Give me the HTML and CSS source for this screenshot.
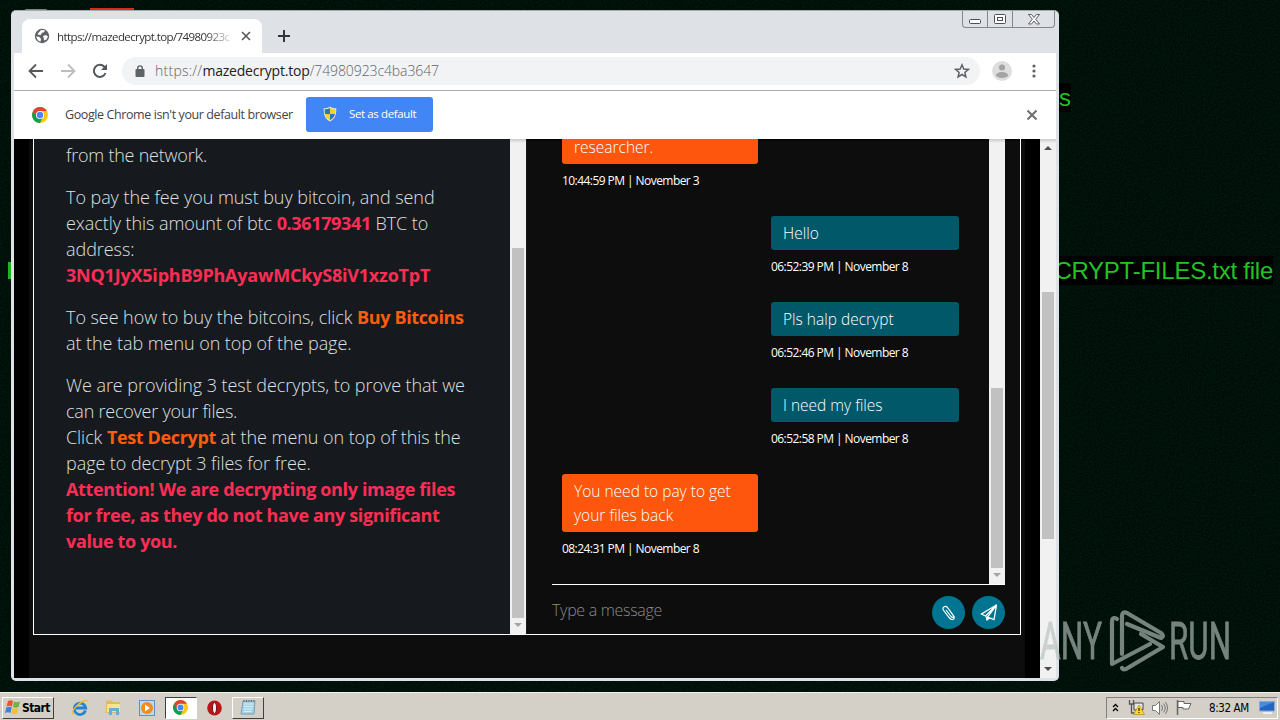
FILE: index.html
```html
<!DOCTYPE html>
<html lang="en">

<head>
  <meta charset="UTF-8">
  <meta name="viewport" content="width=device-width, initial-scale=1.0">
  <title>Desktop</title>
  <link rel="stylesheet" href="styles.css">
</head>

<body>
  <div class="desktop">
    <svg class="grain" width="1280" height="692">
      <filter id="noise" color-interpolation-filters="sRGB">
        <feTurbulence type="fractalNoise" baseFrequency="0.6" numOctaves="2" />
        <feColorMatrix values="0 0 0 0 0  0 0.16 0 0 -0.01  0 0.1 0 0 -0.01  0 0 0 0 1" />
      </filter>
      <rect width="1280" height="692" filter="url(#noise)" />
    </svg>
    <div class="wall-mark"></div>
    <div class="wall-icon"></div>
    <p class="wall-text wall-top">s</p>
    <p class="wall-text wall-file">CRYPT-FILES.txt file</p>
    <i class="wall-edge"></i>

    <main class="window">
      <header class="titlebar">
        <div class="tab">
          <svg class="globe" width="16" height="16" viewBox="0 0 16 16">
            <circle cx="8" cy="8" r="7.2" fill="#5f6368" />
            <path d="M2 8.5l3 .3 2 2-.5 3-2.5-1.2zM7 2l4 .2-1 2-2 .5-1 2-2 .3-1.5-1zM9 8l3-1 2 1.5-1.5 3-2.5 1-.3-2.5z" fill="#fff" />
          </svg>
          <span class="tab-title">https://mazedecrypt.top/74980923c</span>
          <svg class="tab-close" width="10" height="10" viewBox="0 0 10 10"><path d="M1 1l8 8M9 1l-8 8" stroke="#55595e" stroke-width="1.6" /></svg>
        </div>
        <svg class="new-tab" width="12" height="12" viewBox="0 0 12 12"><path d="M6 0v12M0 6h12" stroke="#33373c" stroke-width="2" /></svg>
        <div class="controls">
          <span class="control"><svg width="13" height="6"><rect x=".5" y=".5" width="11" height="4" rx="1" fill="#fff" stroke="#4a4e58" /></svg></span>
          <span class="control"><svg width="12" height="11"><rect x=".5" y=".5" width="11" height="9" rx="1" fill="#fff" stroke="#4a4e58" /><rect x="3.5" y="3.5" width="5" height="3" fill="#fff" stroke="#4a4e58" /></svg></span>
          <span class="control close"><svg width="12" height="11" viewBox="0 0 12 11"><path d="M.5.5h3L6 3.5 8.5.5h3L7.7 5.3l3.800 4.700h-3L6 7l-2.500 3h-3l3.800-4.700z" fill="#fff" stroke="#4a4e58" stroke-width=".9" /></svg></span>
        </div>
      </header>

      <nav class="toolbar">
        <svg width="16" height="16" viewBox="0 0 16 16"><path d="M15 8H2M8 1.500L1.500 8 8 14.500" fill="none" stroke="#55595e" stroke-width="1.800" /></svg>
        <svg width="16" height="16" viewBox="0 0 16 16"><path d="M1 8h13M8 1.500L14.500 8 8 14.500" fill="none" stroke="#bcbec1" stroke-width="1.800" /></svg>
        <svg width="16" height="16" viewBox="0 0 16 16"><path d="M13.500 10A6 6 0 1 1 12.300 3.800L14 5.500" fill="none" stroke="#55595e" stroke-width="2" /><path d="M15 1v6H9z" fill="#55595e" /></svg>
        <div class="address">
          <svg width="10" height="12" viewBox="0 0 10 12"><rect x=".5" y="4" width="9" height="8" rx="1" fill="#5f6368" /><path d="M2.700 5V3.200a2.300 2.300 0 0 1 4.600 0V5" fill="none" stroke="#5f6368" stroke-width="1.400" /></svg>
          <span class="url"><span class="scheme">https://</span><b>mazedecrypt.top</b>/74980923c4ba3647</span>
          <svg class="star" width="16" height="16" viewBox="0 0 16 16"><path d="M8 1.800l1.800 4.200 4.500.4-3.400 3 1 4.500L8 11.500l-3.900 2.400 1-4.500-3.400-3 4.500-.4z" fill="none" stroke="#5f6368" stroke-width="1.500" /></svg>
        </div>
        <svg class="avatar" width="20" height="20" viewBox="0 0 20 20"><circle cx="10" cy="10" r="10" fill="#dedede" /><circle cx="10" cy="6.500" r="3" fill="#a3a3a3" /><ellipse cx="10" cy="14" rx="6" ry="3" fill="#a3a3a3" /></svg>
        <svg class="dots" width="4" height="14" viewBox="0 0 4 14"><g fill="#5f6368"><circle cx="2" cy="2" r="1.600" /><circle cx="2" cy="7" r="1.600" /><circle cx="2" cy="12" r="1.600" /></g></svg>
      </nav>

      <section class="infobar">
        <svg width="16" height="16" viewBox="0 0 16 16"><use href="#chrome" /></svg>
        <span class="info-text">Google Chrome isn't your default browser</span>
        <button class="default-btn" type="button">
          <svg width="14" height="16" viewBox="0 0 14 16">
            <path d="M7 .5C9 2 11 2.300 13.300 2.300 13.500 9 12 13 7 15.500 2 13 .5 9 .7 2.300 3 2.300 5 2 7 .5z" fill="#e8e4d0" />
            <path d="M7 2v6H2Q1.500 6 1.800 3.300 5 3.200 7 2zM7 8h5q-1 4-5 6.200z" fill="#2a78b8" />
            <path d="M7 2v6h5q.5-2 .2-4.700Q9 3.200 7 2zM7 8H2q1 4 5 6.200z" fill="#f8cf32" />
          </svg>
          <span>Set as default</span>
        </button>
        <svg class="info-close" width="10" height="10" viewBox="0 0 10 10"><path d="M.5.5l9 9M9.500.5l-9 9" stroke="#6d6f72" stroke-width="2" /></svg>
      </section>

      <div class="page">
        <div class="content">
          <article class="note">
            <div class="note-text">
              <p class="tight">from the network.</p>
              <p>To pay the fee you must buy bitcoin, and send<br>
                exactly this amount of btc <b>0.36179341</b> BTC to<br>
                address:<br>
                <b class="wallet">3NQ1JyX5iphB9PhAyawMCkyS8iV1xzoTpT</b></p>
              <p>To see how to buy the bitcoins, click <b class="menu">Buy Bitcoins</b><br>
                at the tab menu on top of the page.</p>
              <p>We are providing 3 test decrypts, to prove that we<br>
                <span class="tight">can recover your files.</span><br>
                Click <b class="menu">Test Decrypt</b> at the menu on top of this the<br>
                page to decrypt 3 files for free.<br>
                <b>Attention! We are decrypting only image files<br>
                for free, as they do not have any significant<br>
                value to you.</b></p>
            </div>
            <div class="scroll note-scroll"><i class="thumb"></i><i class="down"></i></div>
          </article>
          <section class="chat">
            <div class="log">
              <div class="messages">
                <div class="msg support first"><p class="bubble">researcher.</p><time>10:44:59 PM | November 3</time></div>
                <div class="msg user"><p class="bubble">Hello</p><time>06:52:39 PM | November 8</time></div>
                <div class="msg user"><p class="bubble">Pls halp decrypt</p><time>06:52:46 PM | November 8</time></div>
                <div class="msg user"><p class="bubble">I need my files</p><time>06:52:58 PM | November 8</time></div>
                <div class="msg support"><p class="bubble">You need to pay to get<br>your files back</p><time>08:24:31 PM | November 8</time></div>
              </div>
              <div class="scroll chat-scroll"><i class="thumb"></i><i class="down"></i></div>
            </div>
            <div class="compose">
              <span class="placeholder">Type a message</span>
              <span class="round"><svg width="15" height="16" viewBox="0 0 15 16"><path d="M5 5l5.500 7c1.500 1 2.500 0 1.700-1.500L6.500 2.500C4.500.2 1 2 2.300 5l6.200 8c2.500 3 6 1 4.300-2L8 4.500" fill="none" stroke="#fff" stroke-width="1.200" /></svg></span>
              <span class="round"><svg width="18" height="18" viewBox="0 0 18 18"><path d="M16.500 1L1.500 10l4 2zM16.500 1L7.500 13l6.500 2.500z" fill="none" stroke="#fff" stroke-width="1.300" /><path d="M5.500 12l2 1 3 1.200L6.500 17z" fill="#fff" /></svg></span>
            </div>
          </section>
        </div>
        <div class="scroll page-scroll"><i class="up"></i><i class="thumb"></i><i class="down"></i></div>
      </div>
    </main>

    <svg class="watermark" width="200" height="70" viewBox="0 0 200 70">
      <g class="watermark-text">
        <text x="0" y="54" textLength="62" lengthAdjust="spacingAndGlyphs">ANY</text>
        <text x="129" y="54" textLength="62" lengthAdjust="spacingAndGlyphs">RUN</text>
      </g>
      <g fill="none" stroke="#b6c0bc" stroke-width="4.200" stroke-linecap="round" stroke-linejoin="round">
        <path d="M77 14q-5-3-5 3v42l38-20" />
        <path d="M82 49V11q0-5 5-3l34 20q4 3 0 5L87 19" />
        <path d="M101 29l22 13-37 22q-3 1-4-1" />
      </g>
    </svg>
  </div>

  <footer class="taskbar">
    <div class="start">
      <svg width="16" height="15" viewBox="0 0 16 15"><path d="M3 1q3-1.500 5 0L7 6.500q-2.500-1.500-5.500 0z" fill="#e8562a" /><path d="M9 1.500q3 1.300 6 0L13.500 7q-3 1.300-5.500 0z" fill="#6fb43f" /><path d="M1.300 7.500q3-1.400 5.500 0L5.500 13Q3 11.500 0 13z" fill="#3b86d8" /><path d="M7.700 8q3 1.400 5.700 0L12 13.500q-3 1.300-5.700 0z" fill="#f5c02e" /></svg>
      <span>Start</span>
    </div>
    <div class="task ie"><svg width="18" height="18" viewBox="0 0 18 18"><path d="M14.500 11.500A5.700 5.700 0 1 1 14.700 9H4" fill="none" stroke="#2484d0" stroke-width="2.800" /><path d="M2 15.500C-1 12 12-1 16.500 2" fill="none" stroke="#e9bd38" stroke-width="1.400" /></svg></div>
    <div class="task folder"><svg width="17" height="17" viewBox="0 0 17 17"><path d="M1 3l1-1.500h5L8 3h7v11H1z" fill="#dcbd58" /><path d="M2 5h13v8H2z" fill="#f8e48f" /><path d="M4 16V9h10v7h-3v-4H7v4z" fill="#62aee0" /></svg></div>
    <div class="task media"><svg width="16" height="16" viewBox="0 0 16 16"><rect x=".5" y=".5" width="15" height="15" fill="#b9dbf4" stroke="#5b93c7" /><circle cx="8" cy="8" r="6" fill="#f28a1c" /><path d="M6 4.500l5 3.500-5 3.500z" fill="#fff" /></svg></div>
    <div class="task active">
      <svg width="15" height="15" viewBox="0 0 16 16">
        <g id="chrome"><circle cx="8" cy="8" r="8" fill="#fbc817" /><path d="M8 8L1.100 4A8 8 0 0 0 8 16l3-6z" fill="#109d58" /><path d="M8 4h6.900A8 8 0 0 0 1.100 4L4.500 10z" fill="#dc4437" /><circle cx="8" cy="8" r="4" fill="#fff" /><circle cx="8" cy="8" r="3.200" fill="#4a87ee" /></g>
      </svg>
    </div>
    <div class="task opera"><svg width="15" height="16" viewBox="0 0 15 16"><ellipse cx="7.500" cy="8" rx="7.300" ry="7.600" fill="#b9151b" /><ellipse cx="7.500" cy="8" rx="2.100" ry="5.500" fill="#eee" stroke="#7b0d10" /></svg></div>
    <div class="task raised"><svg width="16" height="17" viewBox="0 0 16 17"><path d="M3 2h12l-1 13H1z" fill="#a4d4e6" stroke="#789eaf" /><path d="M4 5h9M4 7.500h9M3.500 10h9M3.500 12.500h8" stroke="#d7eef5" /><path d="M4 1v2M6.500 1v2M9 1v2M11.500 1v2M14 1v2" stroke="#667" /></svg></div>
    <div class="tray">
      <svg width="7" height="10" viewBox="0 0 7 10"><path d="M1 4l2.500-2.500L6 4M1 8l2.500-2.500L6 8" fill="none" stroke="#000" stroke-width="1.300" /></svg>
      <svg class="network" width="17" height="15" viewBox="0 0 17 15"><path d="M1.500 0v4h4V0M3.500 4v9H7" fill="none" stroke="#555" stroke-width="1.300" /><path d="M6 3h9v7H6z" fill="#e6e6e6" stroke="#444" /><path d="M11 5l5.500 9.500h-11z" fill="#ffda22" stroke="#a98d16" stroke-width=".7" /><path d="M11 8v3M11 12v1" stroke="#222" stroke-width="1.200" /></svg>
      <svg class="sound" width="16" height="14" viewBox="0 0 16 14"><path d="M.5 4.500h3l4-4v13l-4-4h-3z" fill="#fff" stroke="#777" /><path d="M9.500 4q2 3 0 6M11.500 2.500q3.500 4.500 0 9M13.500 1q4 6 0 12" fill="none" stroke="#777" /></svg>
      <svg class="flag" width="16" height="15" viewBox="0 0 16 15"><path d="M1.500 0v15" stroke="#666" stroke-width="1.500" /><path d="M2 1.500h6v2h7L12.500 9H7V7.500H2z" fill="#fff" stroke="#666" /></svg>
      <span class="clock">8:32 AM</span>
      <svg class="show" width="16" height="13" viewBox="0 0 16 13"><path d="M.5.500h15v9.500H.5z" fill="#2365c6" stroke="#8aa8d2" /><path d="M1 1h14L1 7z" fill="#4a8be2" /><path d="M4 12h9" stroke="#eee" stroke-width="2" /></svg>
    </div>
  </footer>
</body>

</html>
```
FILE: styles.css
```css
* {
  box-sizing: border-box;
}

body {
  margin: 0;
  width: 1280px;
  height: 720px;
  overflow: hidden;
  font-family: "Open Sans", "Noto Sans", sans-serif;
}

p {
  margin: 0;
}

svg {
  display: block;
  flex: none;
}

.desktop {
  position: relative;
  height: 692px;
  background: #00120b;
  overflow: hidden;
}

/* wallpaper */
.grain {
  opacity: 0.7;
}

.wall-mark,
.wall-icon,
.wall-text,
.wall-edge {
  position: absolute;
}

.wall-mark {
  left: 90px;
  top: 8px;
  width: 44px;
  height: 4px;
  background: #d92b1c;
}

.wall-icon {
  left: 24px;
  top: 9px;
  width: 24px;
  height: 3px;
  background: #7b8580;
  border-radius: 8px 8px 0 0;
}

.wall-text {
  color: #22c322;
  background: #000;
  font: 24px/29px "Liberation Sans", Arial, sans-serif;
  white-space: nowrap;
}

.wall-top {
  left: 1059px;
  top: 83px;
}

.wall-file {
  right: 7px;
  top: 256px;
  letter-spacing: -0.25px;
}

.wall-edge {
  left: 8px;
  top: 262px;
  width: 3px;
  height: 17px;
  background: #22b322;
}

/* browser window */
.window {
  position: absolute;
  left: 11px;
  top: 10px;
  width: 1048px;
  height: 671px;
  padding: 0 3px 3px;
  display: flex;
  flex-direction: column;
  background: #dee1e6;
  border-top: 1px solid #a5aaae;
  border-radius: 5px;
  overflow: hidden;
}

.titlebar {
  height: 42px;
  display: flex;
  align-items: flex-end;
}

.tab {
  width: 240px;
  height: 34px;
  margin-left: 8px;
  padding: 0 11px 0 12px;
  display: flex;
  align-items: center;
  background: #fff;
  border-radius: 8px 8px 0 0;
}

.tab-title {
  width: 178px;
  margin-left: 7px;
  font-size: 11.5px;
  letter-spacing: -0.6px;
  white-space: nowrap;
  overflow: hidden;
  color: #333;
  mask-image: linear-gradient(90deg, #000 148px, transparent 178px);
}

.tab-close {
  margin-left: auto;
}

.new-tab {
  margin: 0 0 11px 16px;
}

.controls {
  align-self: flex-start;
  display: flex;
  height: 17px;
  margin-left: auto;
  margin-right: 1px;
  border: 1px solid #83878f;
  border-top: 0;
  border-radius: 0 0 4px 4px;
}

.control {
  width: 25px;
  display: flex;
  align-items: center;
  justify-content: center;
  border-right: 1px solid #83878f;
}

.control:first-child {
  padding-top: 5px;
}

.control.close {
  width: 41px;
  border: 0;
}

.toolbar {
  height: 38px;
  display: flex;
  align-items: center;
  gap: 16px;
  padding: 0 20px 2px 14px;
  background: #fff;
  border-bottom: 1px solid #acaeb1;
}

.address {
  flex: 1;
  height: 28px;
  margin-left: -2px;
  padding: 0 10px 0 13px;
  display: flex;
  align-items: center;
  background: #f1f3f4;
  border-radius: 14px;
}

.url {
  margin-left: 10px;
  font-size: 14px;
  font-weight: 300;
  letter-spacing: -0.1px;
  color: #5f6368;
}

.url .scheme {
  letter-spacing: 0.25px;
}

.url b {
  font-weight: 400;
  letter-spacing: -0.2px;
  color: #202124;
}

.star {
  margin-left: auto;
}

.avatar {
  margin: 0 4px 0 -4px;
}

.infobar {
  height: 48px;
  display: flex;
  align-items: center;
  padding: 0 19px 0 18px;
  background: #fff;
}

.info-text {
  width: 241px;
  margin-left: 17px;
  padding-bottom: 1px;
  font-size: 12.5px;
  letter-spacing: -0.4px;
  color: #444;
  white-space: nowrap;
}

.default-btn {
  width: 127px;
  height: 35px;
  padding: 0 0 2px 17px;
  display: flex;
  align-items: center;
  gap: 12px;
  border: 0;
  border-radius: 3px;
  background: #4285f4;
  color: #fff;
  font: 11.5px "Open Sans", "Noto Sans", sans-serif;
  letter-spacing: -0.38px;
  white-space: nowrap;
  margin-bottom: 1px;
}

.info-close {
  margin-left: auto;
}

.page {
  flex: 1;
  display: flex;
  width: 1042px;
  background: #000;
  overflow: hidden;
}

.content {
  width: 996px;
  margin: 0 15px;
  padding: 0 4px 43px;
  display: flex;
  background: #0d0d0d;
  box-shadow: inset 0 3px 3px -2px #000;
}

/* ransom note */
.note {
  width: 494px;
  display: flex;
  background: #16191d;
  border-left: 1px solid #fff;
  border-bottom: 1px solid #fff;
}

.note-text {
  width: 476px;
  padding: 3px 0 0 32px;
  font-size: 18px;
  font-weight: 300;
  line-height: 26px;
  letter-spacing: -0.06px;
  color: #dfe0e1;
  white-space: nowrap;
}

.note-text p {
  margin-bottom: 16px;
}

.note-text .tight {
  letter-spacing: -0.23px;
}

.note-text b {
  font-weight: 700;
  letter-spacing: -0.36px;
  color: #ff2d55;
}

.note-text .wallet {
  letter-spacing: -0.21px;
}

.note-text .menu {
  color: #ff5c0f;
}

/* scrollbars */
.scroll {
  width: 16px;
  flex: none;
  display: flex;
  flex-direction: column;
  align-items: center;
  background: linear-gradient(#c9c9c9, #f1f1f1 4px);
}

.thumb {
  width: 12px;
  background: #c1c1c1;
}

.up,
.down {
  border: 4px solid transparent;
}

.down {
  margin-top: 5px;
  border-top-color: #a3a3a3;
  border-bottom: 0;
}

.up {
  margin-top: 7px;
  border-bottom-color: #505050;
  border-top: 0;
}

.note-scroll .thumb {
  height: 370px;
  margin-top: 109px;
}

.chat-scroll .thumb {
  height: 180px;
  margin-top: 249px;
}

.page-scroll .thumb {
  height: 247px;
  margin-top: 142px;
}

.page-scroll .down {
  margin-top: auto;
  margin-bottom: 7px;
  border-top-color: #505050;
}

/* chat */
.chat {
  flex: 1;
  padding: 0 15px 0 25px;
  border-right: 1px solid #fff;
  border-bottom: 1px solid #fff;
}

.log {
  height: 446px;
  display: flex;
  border-bottom: 1px solid #fff;
  overflow: hidden;
}

.messages {
  flex: 1;
  padding: 0 30px 0 10px;
}

.msg {
  width: 196px;
  margin-bottom: 26px;
}

.msg.user {
  width: 188px;
  margin-left: auto;
}

.msg.first {
  margin-top: -9px;
}

.bubble {
  padding: 5px 12px;
  border-radius: 3px;
  font-size: 15.5px;
  font-weight: 300;
  line-height: 24px;
  color: #fff;
  white-space: nowrap;
}

.support .bubble {
  background: #ff560d;
}

.user .bubble {
  background: #005869;
}

.msg time {
  display: block;
  margin-top: 8px;
  font-size: 12px;
  line-height: 18px;
  letter-spacing: -0.56px;
  color: #fff;
  white-space: nowrap;
}

.compose {
  display: flex;
  gap: 7px;
  padding-top: 11px;
}

.placeholder {
  flex: 1;
  font-size: 16px;
  font-weight: 300;
  line-height: 28px;
  letter-spacing: -0.3px;
  color: #8a8a8a;
}

.round {
  width: 33px;
  height: 33px;
  display: flex;
  align-items: center;
  justify-content: center;
  border-radius: 50%;
  background: #007490;
}

.watermark {
  position: absolute;
  left: 1040px;
  top: 605px;
  opacity: 0.65;
}

.watermark-text {
  font-family: Roboto, sans-serif;
  font-size: 52px;
  fill: #b6c0bc;
  stroke: #b6c0bc;
  stroke-width: 0.8px;
}

/* taskbar */
.taskbar {
  height: 28px;
  padding: 2px 2px 0;
  display: flex;
  align-items: center;
  background: #d4d0c8;
  border-top: 1px solid #f4f2ee;
}

.start {
  width: 52px;
  height: 22px;
  display: flex;
  align-items: center;
  gap: 1px;
  padding-left: 2px;
  margin-right: 14px;
  border: 1px solid;
  border-color: #fff #404040 #404040 #fff;
  font: bold 12px "DejaVu Sans Condensed", "DejaVu Sans", sans-serif;
  letter-spacing: -0.6px;
}

.task {
  width: 32px;
  height: 22px;
  margin-right: 1.6px;
  display: flex;
  align-items: center;
  justify-content: center;
}

.task.ie {
  margin-left: -4px;
}

.active {
  background: #fff;
  border: 1px solid;
  border-color: #404040 #fff #fff #404040;
}

.raised {
  border: 1px solid;
  border-color: #fff #404040 #404040 #fff;
}

.tray {
  width: 172px;
  height: 22px;
  margin-left: auto;
  padding: 0 2px 0 5px;
  display: flex;
  align-items: center;
  border: 1px solid;
  border-color: #808080 #fff #fff #808080;
}

.network {
  margin-left: 9px;
}

.sound {
  margin-left: 7px;
}

.flag {
  margin-left: 8px;
}

.clock {
  margin-left: 17px;
  font: 11.5px "DejaVu Sans Condensed", "DejaVu Sans", sans-serif;
  letter-spacing: -0.4px;
  white-space: nowrap;
}

.show {
  margin-left: auto;
}
```
